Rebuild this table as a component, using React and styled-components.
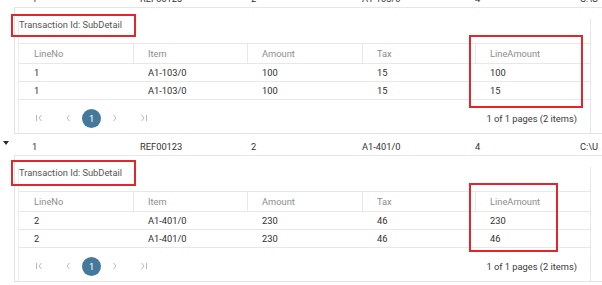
import React from "react";
import styled, { createGlobalStyle } from "styled-components";

const GlobalStyle = createGlobalStyle`
  html, body {
    margin: 0;
    padding: 0;
    background: #ffffff;
    overflow: hidden;
  }
  body {
    font-family: Roboto, "Liberation Sans", Arial, sans-serif;
    font-size: 9.3px;
    color: #333333;
  }
`;

const Page = styled.div`
  width: 602px;
  margin-top: -14px;
`;

const MasterRow = styled.div`
  display: grid;
  grid-template-columns: 14px 114px 111px 111px 113px 105px 1fr;
  height: 22px;
  overflow: hidden;
  white-space: nowrap;
`;

const ExpandCell = styled.div`
  padding: 7px 0 0 3px;
`;

const Arrow = styled.span`
  display: block;
  width: 0;
  height: 0;
  border-left: 3px solid transparent;
  border-right: 3px solid transparent;
  border-top: 4px solid #2b2b2b;
  visibility: ${(p) => (p.$open ? "visible" : "hidden")};
`;

const MasterCell = styled.div`
  border-bottom: 1px solid #e6e6e6;
  padding: 7px 0 0 ${(p) => (p.$first ? "18px" : "12px")};
  line-height: 12px;
  overflow: hidden;
`;

const DetailRow = styled.div`
  position: relative;
`;

const DetailCell = styled.div`
  margin-left: 14px;
  border-left: 1px solid #e3e3e3;
  border-bottom: 1px solid #e3e3e3;
  padding: 12px 11px 0 3px;
`;

const Panel = styled.div`
  border-left: 1px solid #ececec;
  border-right: 1px solid #e6e6e6;
`;

const Caption = styled.div`
  margin-top: -1px;
  height: 24px;
  line-height: 12px;
  color: #555555;
`;

const GridRow = styled.div`
  display: grid;
  grid-template-columns: 114px 114px 115px 113px 1fr;
  border-bottom: 1px solid #e8e8e8;
  ${(p) => p.$head && "border-top: 1px solid #e8e8e8;"}
`;

const HeadCell = styled.div`
  line-height: 19px;
  padding-left: 14px;
  color: #8d8d8d;
  & + & {
    border-left: 1px solid #e8e8e8;
  }
  &:first-child {
    padding-left: 15px;
  }
`;

const DataCell = styled.div`
  line-height: 17px;
  padding-left: 15px;
  color: #2f2f2f;
`;

const Pager = styled.div`
  display: flex;
  align-items: center;
  justify-content: space-between;
  height: 30px;
  padding: 3px 13px 0 7px;
`;

const PageNav = styled.div`
  display: flex;
  align-items: center;
`;

const NavButton = styled.span`
  width: 28px;
  height: 20px;
  display: flex;
  align-items: center;
  justify-content: center;
`;

const PageNumber = styled.span`
  width: 19px;
  height: 19px;
  border-radius: 50%;
  background: #45799b;
  color: #ffffff;
  display: flex;
  align-items: center;
  justify-content: center;
  font-size: 9.3px;
`;

const PageInfo = styled.span`
  color: #3a3a3a;
`;

const RedMark = styled.div`
  position: absolute;
  top: ${(p) => p.$top}px;
  left: ${(p) => p.$left}px;
  width: ${(p) => p.$w}px;
  height: ${(p) => p.$h}px;
  border: 2px solid #e3262b;
  box-sizing: border-box;
  pointer-events: none;
`;

const Chevron = ({ dir, bar }) => {
  const left = dir === "left";
  return (
    <svg width="10" height="10" viewBox="0 0 10 10" fill="none" stroke="#b9b9b9" strokeWidth="1">
      {left ? <path d="M6.5 2 L4 5 L6.5 8" /> : <path d="M3.5 2 L6 5 L3.5 8" />}
      {bar && (left ? <path d="M1.5 2 V8" /> : <path d="M8.5 2 V8" />)}
    </svg>
  );
};

const columns = ["LineNo", "Item", "Amount", "Tax", "LineAmount"];

function Master({ values, open }) {
  return (
    <MasterRow>
      <ExpandCell>
        <Arrow $open={open} />
      </ExpandCell>
      {values.map((v, i) => (
        <MasterCell key={i} $first={i === 0}>
          {v}
        </MasterCell>
      ))}
    </MasterRow>
  );
}

function Detail({ rows, marks }) {
  return (
    <DetailRow>
      <DetailCell>
        <Panel>
          <Caption>Transaction Id: SubDetail</Caption>
          <GridRow $head>
            {columns.map((c) => (
              <HeadCell key={c}>{c}</HeadCell>
            ))}
          </GridRow>
          {rows.map((r, i) => (
            <GridRow key={i}>
              {r.map((v, j) => (
                <DataCell key={j}>{v}</DataCell>
              ))}
            </GridRow>
          ))}
          <Pager>
            <PageNav>
              <NavButton>
                <Chevron dir="left" bar />
              </NavButton>
              <NavButton>
                <Chevron dir="left" />
              </NavButton>
              <PageNumber>1</PageNumber>
              <NavButton>
                <Chevron dir="right" />
              </NavButton>
              <NavButton>
                <Chevron dir="right" bar />
              </NavButton>
            </PageNav>
            <PageInfo>1 of 1 pages (2 items)</PageInfo>
          </Pager>
        </Panel>
      </DetailCell>
      {marks.map((m, i) => (
        <RedMark key={i} $top={m[0]} $left={m[1]} $w={m[2]} $h={m[3]} />
      ))}
    </DetailRow>
  );
}

export default function App() {
  return (
    <>
      <GlobalStyle />
      <Page>
        <Master values={["1", "REF00123", "2", "A1-103/0", "4", "C:\\U"]} open />
        <Detail
          rows={[
            ["1", "A1-103/0", "100", "15", "100"],
            ["1", "A1-103/0", "100", "15", "15"],
          ]}
          marks={[
            [6, 11, 125, 23],
            [27, 469, 114, 73],
          ]}
        />
        <Master values={["1", "REF00123", "2", "A1-401/0", "4", "C:\\U"]} open />
        <Detail
          rows={[
            ["2", "A1-401/0", "230", "46", "230"],
            ["2", "A1-401/0", "230", "46", "46"],
          ]}
          marks={[
            [4, 11, 125, 26],
            [27, 469, 89, 69],
          ]}
        />
      </Page>
    </>
  );
}
